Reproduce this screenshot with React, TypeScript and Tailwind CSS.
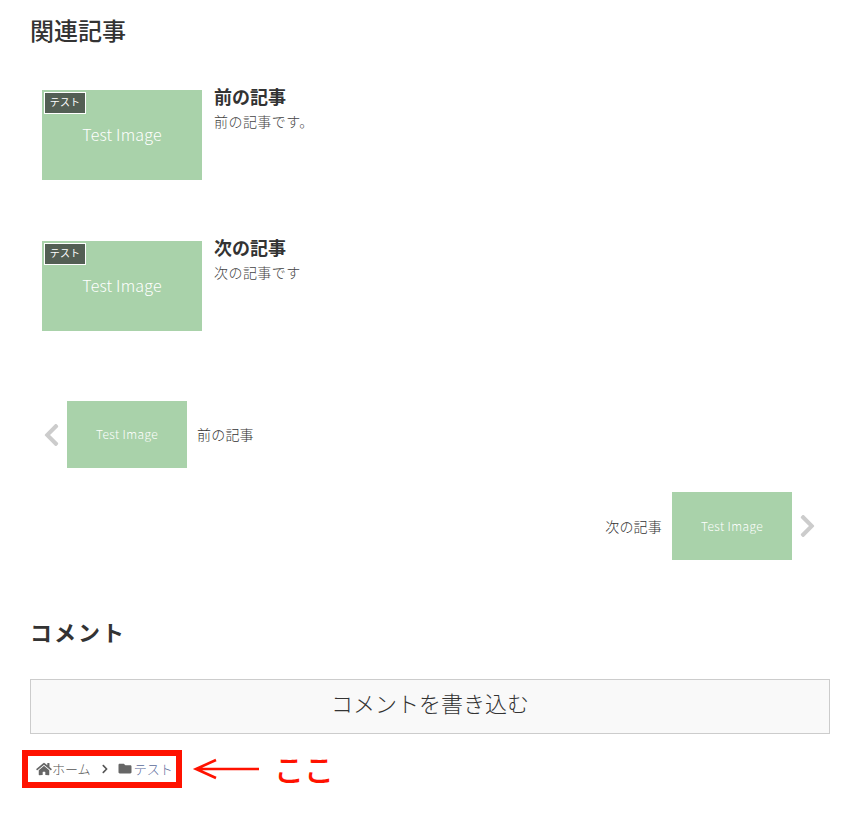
import { FaChevronLeft, FaChevronRight, FaFolder, FaHome } from "react-icons/fa";

const font = "font-['Noto_Sans_CJK_JP',sans-serif]";

function RelatedCard({ title, desc }: { title: string; desc: string }) {
  return (
    <div className="flex h-[90px] gap-3 pl-3">
      <div className="relative flex h-[90px] w-40 shrink-0 items-center justify-center bg-[#a9d2aa] pb-[2px] text-base font-light tracking-[0.2px] text-white">
        <span>Test Image</span>
        <span className="absolute left-[2px] top-[2px] flex h-[22px] w-[42px] items-center justify-center border border-white bg-[#535f54] pb-[2px] text-[10px] font-normal leading-none">
          テスト
        </span>
      </div>
      <div>
        <h3 className="text-lg leading-[12px] font-bold text-[#333]">{title}</h3>
        <p className="mt-[9px] text-sm leading-[20px] font-light tracking-[0.45px] text-[#444]">{desc}</p>
      </div>
    </div>
  );
}

function PagerThumb({ h }: { h: string }) {
  return (
    <div className={`flex ${h} w-[120px] shrink-0 items-center justify-center bg-[#a9d2aa] pb-[1px] text-xs font-light tracking-[0.4px] text-white`}>
      Test Image
    </div>
  );
}

export default function App() {
  return (
    <div className={`${font} relative h-[815px] w-[860px] overflow-hidden bg-white px-[30px] text-[#333]`}>
      <h2 className="pt-[14px] text-2xl leading-[32px] font-medium">関連記事</h2>

      <div className="mt-[44px] flex flex-col gap-[61px]">
        <RelatedCard title="前の記事" desc="前の記事です。" />
        <RelatedCard title="次の記事" desc="次の記事です" />
      </div>

      <div className="mt-[70px] flex h-[67px] items-center pl-3">
        <FaChevronLeft className="h-[26px] w-[19px] text-[#ccc]" />
        <div className="ml-[6px]">
          <PagerThumb h="h-[67px]" />
        </div>
        <span className="ml-[10px] pb-[1px] text-sm font-light tracking-[0.2px] text-[#333]">前の記事</span>
      </div>

      <div className="mt-6 flex h-[68px] items-center justify-end pr-[13px]">
        <span className="mr-[10px] pb-[1px] text-sm font-light tracking-[0.2px] text-[#333]">次の記事</span>
        <PagerThumb h="h-[68px]" />
        <FaChevronRight className="ml-[6px] h-[26px] w-[19px] text-[#ccc]" />
      </div>

      <h2 className="mt-[55px] text-[22px] leading-[32px] font-bold tracking-[2px] text-[#333]">コメント</h2>

      <div className="mt-[32px] flex h-[55px] items-center justify-center border border-[#ccc] bg-[#f9f9f9] pb-[8px] text-[22px] font-light text-[#333]">
        コメントを書き込む
      </div>

      <div className="mt-[25px] flex h-[20px] items-center pb-[1px] pl-[6px] text-[13px] font-light text-[#555]">
        <FaHome className="h-[14px] w-[16px] text-[#666]" />
        <span>ホーム</span>
        <FaChevronRight className="ml-[10px] mr-[9px] h-[10px] w-[8px] text-[#555]" />
        <FaFolder className="h-[13px] w-[14px] text-[#666]" />
        <span className="ml-[2px] text-[#5a6a9a]">テスト</span>
      </div>

      {/* annotation over the screenshot */}
      <div className="absolute left-[22px] top-[750px] h-[38px] w-[160px] border-[6px] border-[#ff1200]" />
      <svg className="absolute left-[192px] top-[756px]" width="70" height="26" viewBox="0 0 70 26" fill="none">
        <path d="M67 13H6M24 4 4 13l20 9" stroke="#ff1200" strokeWidth="2.6" />
      </svg>
      <span className="absolute left-[274px] top-[748px] text-[30px] leading-[40px] font-medium text-[#ff1200]">ここ</span>
    </div>
  );
}
